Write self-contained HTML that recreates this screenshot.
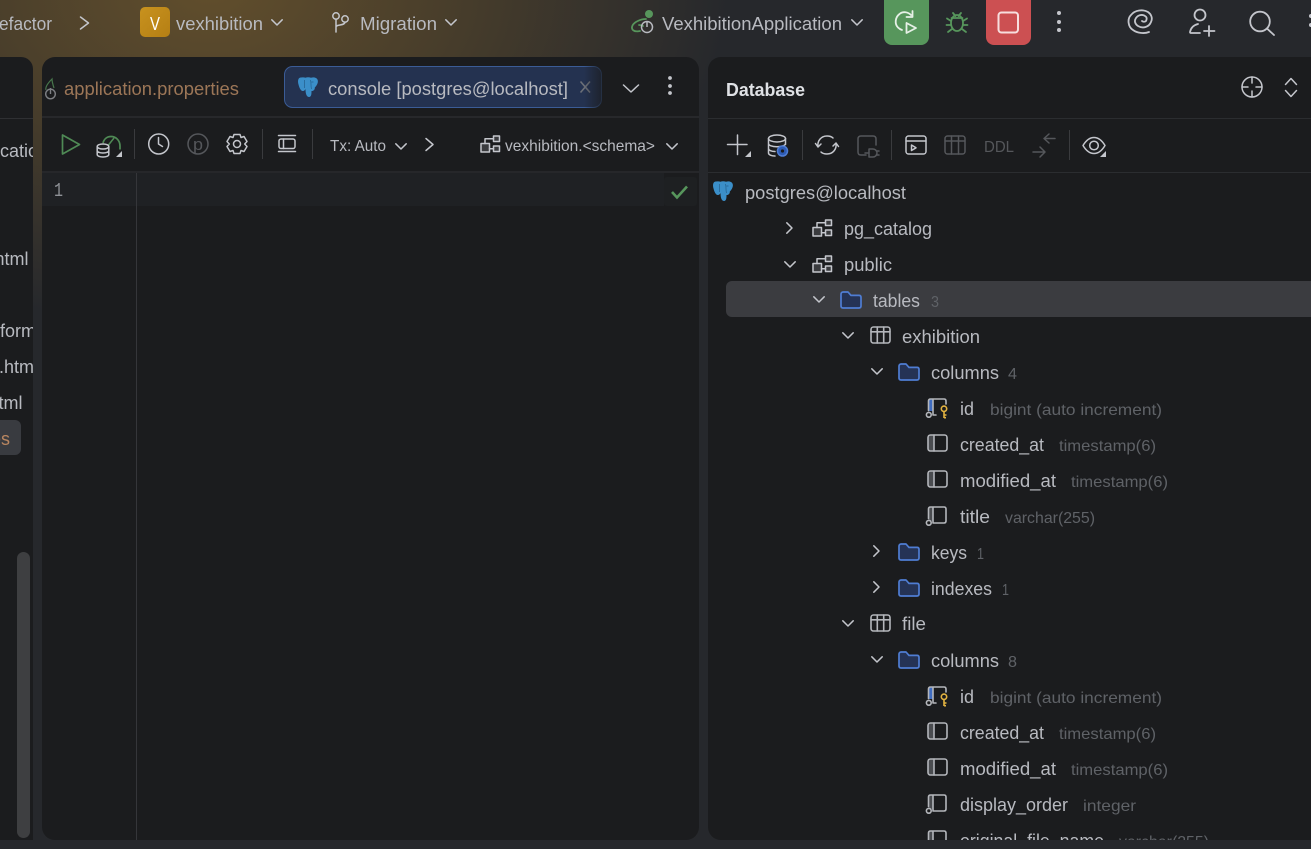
<!DOCTYPE html>
<html lang="en"><head><meta charset="utf-8"><title>Database</title>
<style>
html,body{margin:0;padding:0;width:1311px;height:849px;overflow:hidden;background:#26282c}
body{background:radial-gradient(ellipse 520px 340px at 210px -10px,#614e2c 0%,#493e2b 45%,#26282c 100%),#26282c}
svg{display:block;position:absolute;left:0;top:0}
text{font-family:"Liberation Sans",sans-serif;font-size:18px;fill:#b8bac0}
.s{font-size:16px;fill:#5f6267}
.i{fill:none;stroke:#c4c6cc;stroke-width:1.5;stroke-linecap:round;stroke-linejoin:round}
.d{fill:none;stroke:#55575b;stroke-width:1.5;stroke-linecap:round;stroke-linejoin:round}
.g{fill:none;stroke:#57965c;stroke-width:1.8;stroke-linecap:round;stroke-linejoin:round}
.c{fill:none;stroke:#b4b6bb;stroke-width:1.6;stroke-linecap:round;stroke-linejoin:round}
</style></head><body>
<svg width="1311" height="849" viewBox="0 0 1311 849" xmlns="http://www.w3.org/2000/svg">
<defs>
<linearGradient id="fd" x1="0" x2="1" y1="0" y2="0"><stop offset="0" stop-color="#1b1c1e" stop-opacity="0"/><stop offset="1" stop-color="#1b1c1e" stop-opacity=".75"/></linearGradient>
<linearGradient id="vg" x1="0" x2="1" y1="0" y2="1"><stop offset="0" stop-color="#c8921e"/><stop offset="1" stop-color="#b57f14"/></linearGradient>
<clipPath id="lp"><rect x="0" y="57" width="33" height="783"/></clipPath>
<clipPath id="tr"><rect x="708" y="173" width="603" height="667"/></clipPath>
<symbol id="pg" viewBox="0 0 20 20" width="20" height="20" overflow="visible">
<path fill="#3b8fc9" d="M3 .5C0 .5-.5 4 .5 7.500c.8 3 2 6 4 6.500 1.500.3 2.500-1 3-2 0 3 .5 8 3.500 8 2.500 0 2.500-3.500 2.500-6 2 .2 3.500-1.500 3.300-3.500C18.500 9 20.300 6 19.800 3.500 19.300.8 16-.3 13 .8 11 0 9 0 7.500.8 6 .2 5 .5 3 .5Z"/>
<path d="M6.500 3v8M12.500 3c1 3 0 6 1 9M15.500 5h-2" fill="none" stroke="#245f8c" stroke-width=".7"/>
</symbol>
<symbol id="sch" viewBox="0 0 21 18" width="21" height="18" overflow="visible">
<path class="i" fill="#3a3b3e" style="fill:#3a3b3e" d="M1 8.500h8.500V17H1ZM13.500 1h6v5.500h-6ZM13.500 11h6v5.500h-6Z"/>
<path class="i" d="M5 8.500V3.700h8.500M9.500 13.700h4"/>
</symbol>
<symbol id="fo" viewBox="0 0 22 18" width="22" height="18" overflow="visible">
<path d="M1 3.200C1 1.800 1.800 1 3.200 1H8l3 3.400h8c1.300 0 2 .8 2 2V15c0 1.300-.7 2-2 2H3c-1.300 0-2-.7-2-2Z" fill="#253355" stroke="#4f7dd3" stroke-width="1.700" stroke-linejoin="round"/>
</symbol>
<symbol id="tb" viewBox="0 0 21 18" width="21" height="18" overflow="visible">
<rect x="1" y="1" width="19" height="16" rx="2.500" class="c"/><path class="c" d="M1 5.800h19M7.300 1V17M13.700 1V17"/>
</symbol>
<symbol id="col" viewBox="0 0 21 18" width="21" height="18" overflow="visible">
<path d="M1 2.500C1 1.500 1.500 1 2.500 1H7v16H2.500C1.500 17 1 16.500 1 15.500Z" fill="#4a4c50"/>
<rect x="1" y="1" width="19" height="16" rx="2.500" class="c"/><path class="c" d="M7 1v16"/>
</symbol>
<symbol id="colt" viewBox="0 0 21 20" width="21" height="20" overflow="visible">
<path d="M2.500 12V2.500L4 1h3v14H2.500Z" fill="#4a4c50"/>
<path class="c" d="M2.500 12.500V3c0-1.300.7-2 2-2H18c1.300 0 2 .7 2 2v12c0 1.300-.7 2-2 2H7M7 1v16"/><circle cx="2.800" cy="16.800" r="2.400" class="c"/>
</symbol>
<symbol id="colk" viewBox="0 0 22 20" width="22" height="20" overflow="visible">
<path d="M2.500 12V2.500L4 1h3v12H2.500Z" fill="#3f6cc0"/>
<path class="c" d="M2.500 12.500V3c0-1.300.7-2 2-2H18c1.300 0 2 .7 2 2v3M7 1v16h3M7 17h3"/><circle cx="2.800" cy="16.800" r="2.400" class="c"/>
<circle cx="18" cy="10.800" r="2.700" fill="none" stroke="#e3b341" stroke-width="1.600"/><path d="M18 13.500V20M18 17h2.500M18 19.700h2" fill="none" stroke="#e3b341" stroke-width="1.600"/>
</symbol>
<symbol id="cd" viewBox="0 0 12 7" width="12" height="7" overflow="visible"><path class="i" d="M.8.800 6 6 11.200.800"/></symbol>
<symbol id="cr" viewBox="0 0 7 12" width="7" height="12" overflow="visible"><path class="i" d="M.8.800 6 6 .8 11.200"/></symbol>
</defs>

<!-- panels -->
<rect x="-20" y="57" width="53" height="800" rx="12" fill="#1b1c1e"/>
<rect x="42" y="57" width="657" height="783" rx="13" fill="#1b1c1e"/>
<rect x="708" y="57" width="630" height="783" rx="13" fill="#1b1c1e"/>
<rect x="0" y="840" width="1311" height="9" fill="#26282c"/>
<rect x="33" y="320" width="9" height="529" fill="#26282c"/>

<!-- top bar -->
<text x="-1" y="30" textLength="53" lengthAdjust="spacingAndGlyphs">efactor</text>
<path class="i" d="M80.500 17 88.500 23 80.500 29"/>
<rect x="140" y="7" width="30" height="30" rx="5" fill="url(#vg)"/>
<text x="150" y="30" textLength="10" lengthAdjust="spacingAndGlyphs" style="fill:#fff">V</text>
<text x="176" y="30" textLength="87" lengthAdjust="spacingAndGlyphs">vexhibition</text>
<use href="#cd" x="271" y="19"/>
<path class="i" d="M336 32V19M336 27c0-3 9-1 9-5"/><circle cx="336" cy="16" r="3.200" class="i"/><circle cx="345" cy="19" r="3.200" class="i"/>
<text x="360" y="30" textLength="77" lengthAdjust="spacingAndGlyphs">Migration</text>
<use href="#cd" x="445" y="19"/>

<circle cx="649" cy="14" r="4" fill="#57965c"/>
<path class="g" d="M646 19c-5 0-13 3-14 8-.5 4 4 5 8 4M639 25c2 0 3 0 4 1"/>
<circle cx="647" cy="27" r="5.500" fill="none" stroke="#b8bac0" stroke-width="1.500"/><path stroke="#b8bac0" stroke-width="1.500" d="M647 21v6"/>
<text x="662" y="30" textLength="180" lengthAdjust="spacingAndGlyphs">VexhibitionApplication</text>
<use href="#cd" x="851" y="19"/>
<path d="M884 -5h45v42a8 8 0 0 1-8 8h-29a8 8 0 0 1-8-8Z" fill="#57965c"/>
<path fill="none" stroke="#e6f0e6" stroke-width="1.800" stroke-linecap="round" stroke-linejoin="round" d="M911 15C908 12 903 11 899.500 14 895 17.500 894.500 24 898 27.500 899 28.500 900.500 29.500 902 30M912.500 11v6h-6"/>
<path fill="none" stroke="#e6f0e6" stroke-width="1.800" stroke-linejoin="round" d="M906.500 23v10l9.500-5Z"/>
<g class="g"><ellipse cx="957" cy="23" rx="6" ry="8"/><path d="M953 13l2.500 3M961 13l-2.500 3M951 21l-4-2.500M951 25h-4.500M952 29l-4 3M963 21l4-2.500M963 25h4.500M962 29l4 3M951.500 18h11"/></g>
<path d="M986 -5h45v42a8 8 0 0 1-8 8h-29a8 8 0 0 1-8-8Z" fill="#cc5052"/>
<rect x="998.500" y="12.500" width="19.500" height="20" rx="3" fill="none" stroke="#f7dede" stroke-width="2"/>
<g fill="#c4c6cc"><circle cx="1059" cy="13" r="2"/><circle cx="1059" cy="22" r="2"/><circle cx="1059" cy="30" r="2"/></g>
<path class="i" style="stroke-width:1.800" d="M1149 32c-5 2-12 1-16-2-5-3-6-11-2-15 4-5 12-6 17-3 3 2 5 6 3 10-2 5-8 7-13 4-3-2-4-5-2-8 2-3 6-4 9-2 2 1 2 3 1 5-1 1-3 1-4 0"/>
<circle cx="1200" cy="15" r="5.500" class="i" style="stroke-width:1.800"/>
<path class="i" style="stroke-width:1.800" d="M1198 24c-4 1-7 3-8 8 0 1 0 1 1 1h9M1204 31h10.500M1209 26v10"/>
<circle cx="1260" cy="21.500" r="9.800" class="i" style="stroke-width:1.800"/><path class="i" style="stroke-width:1.800" d="M1267.500 29 1274 35"/>
<g fill="#c4c6cc"><circle cx="1311" cy="16" r="2"/><circle cx="1311" cy="25" r="2"/></g>

<!-- left panel -->
<g clip-path="url(#lp)">
<rect x="0" y="118" width="33" height="1" fill="#2f3033"/>
<text x="0" y="157">cation</text>
<text x="-5.500" y="265">html</text>
<text x="0" y="337">form</text>
<text x="-1" y="373">.html</text>
<text x="-11.500" y="409">html</text>
<rect x="-10" y="420" width="31" height="35" rx="6" fill="#393b40"/>
<text x="-9" y="445" style="fill:#b98660">es</text>
<rect x="17" y="552" width="13" height="286" rx="6.500" fill="#3e3f41"/>
</g>

<!-- center tabs -->
<g opacity=".75"><path d="M46 90c-1-3 2-7 6-11 0 3 1 6 2 9" fill="none" stroke="#57965c" stroke-width="1.200"/><circle cx="50.500" cy="94" r="4.800" fill="none" stroke="#a0a2a6" stroke-width="1.400"/><path d="M50.500 88v6" stroke="#a0a2a6" stroke-width="1.400"/></g>
<text x="64" y="95" textLength="175" lengthAdjust="spacingAndGlyphs" style="fill:#9c7657">application.properties</text>
<rect x="284.500" y="66.500" width="317" height="41" rx="8" fill="#243250" stroke="#3b5c96"/>
<use href="#pg" x="298" y="77"/>
<text x="328" y="95" textLength="240" lengthAdjust="spacingAndGlyphs">console [postgres@localhost]</text>
<path d="M580.500 81.500 590 92.500M590 81.500 580.500 92.500" stroke="#6c7078" stroke-width="1.600" fill="none"/>
<rect x="584" y="65" width="19" height="44" fill="url(#fd)"/>
<path class="i" d="M623.500 85 631 92 638.500 85"/>
<g fill="#c4c6cc"><circle cx="670" cy="78" r="1.900"/><circle cx="670" cy="86" r="1.900"/><circle cx="670" cy="93" r="1.900"/></g>
<rect x="42" y="116" width="657" height="2" fill="#27282b"/>

<!-- center toolbar -->
<path d="M62.500 135v19l17-9.500Z" fill="none" stroke="#4f8a55" stroke-width="1.700" stroke-linejoin="round"/>
<path d="M103 143c1-4 4-6.500 8-6.500 5 0 9 4 9 9.500v3.500" fill="none" stroke="#4f8a55" stroke-width="1.700"/><path d="M108.500 145l5.500-7" stroke="#4f8a55" stroke-width="1.500"/>
<g class="i"><ellipse cx="103" cy="146.500" rx="5.800" ry="2.500" style="fill:#1b1c1e"/><path d="M97.200 146.500v8c0 1.500 2.500 2.500 5.800 2.500s5.800-1 5.800-2.500v-8M97.200 150.500c0 1.500 2.500 2.500 5.800 2.500s5.800-1 5.800-2.500"/></g>
<path d="M122 151v6h-6Z" fill="#c4c6cc"/>
<rect x="134" y="129" width="1" height="30" fill="#3a3b3e"/>
<circle cx="158.700" cy="144" r="10" class="i"/><path class="i" d="M158.500 137.500v6.500l4 2.500"/>
<circle cx="198" cy="144" r="10" class="d"/>
<text x="193" y="150" textLength="10" lengthAdjust="spacingAndGlyphs" style="fill:#55575b;font-size:17px">p</text>
<path class="i" d="M234 134.500h6l1 3 3-1 3 5-2.300 2.500 2.300 2.500-3 5-3-1-1 3h-6l-1-3-3 1-3-5 2.300-2.500-2.300-2.500 3-5 3 1Z"/><circle cx="237" cy="144" r="3.500" class="i"/>
<rect x="262" y="129" width="1" height="30" fill="#3a3b3e"/>
<path class="i" d="M278.500 135.500h17M278.500 151.500h17"/><rect x="279" y="139" width="16" height="9.500" rx="2" class="i"/><path class="i" d="M283.500 139v9.500"/>
<rect x="312" y="129" width="1" height="30" fill="#3a3b3e"/>
<text x="330" y="151" textLength="56" lengthAdjust="spacingAndGlyphs" style="font-size:16px">Tx: Auto</text>
<use href="#cd" x="395" y="143"/>
<path class="i" d="M426 138.500 433 144.500 426 150.500"/>
<use href="#sch" x="480" y="135"/>
<text x="505" y="151" textLength="150" lengthAdjust="spacingAndGlyphs" style="font-size:16px">vexhibition.&lt;schema&gt;</text>
<use href="#cd" x="666" y="143"/>
<rect x="42" y="171" width="657" height="2" fill="#26272a"/>

<!-- editor -->
<rect x="42" y="173" width="622" height="33" fill="#1f2124"/>
<rect x="664" y="177" width="33" height="29" rx="3" fill="#1e2022"/>
<rect x="136" y="173" width="1" height="667" fill="#35363a"/>
<text x="54" y="196" textLength="9" lengthAdjust="spacingAndGlyphs" style="fill:#8f9297;font-family:'Liberation Mono',monospace;font-size:19px">1</text>
<path d="M672 192l5 5.500 10-11" fill="none" stroke="#57965c" stroke-width="2.600"/>

<!-- database header -->
<text x="726" y="96" textLength="79" lengthAdjust="spacingAndGlyphs" style="fill:#dfe1e5;font-weight:700">Database</text>
<circle cx="1252" cy="87" r="10" class="i"/><path class="i" d="M1252 77v6M1252 91v6M1242 87h6M1256 87h6"/>
<path class="i" d="M1285.500 84.500 1291 78.500 1296.500 84.500M1285.500 90.500 1291 96.500 1296.500 90.500"/>
<rect x="708" y="118" width="603" height="1" fill="#2b2d30"/>

<!-- db toolbar -->
<path class="i" d="M737.500 135v19.500M727.500 144.500h19.500"/><path d="M751 151v6h-6Z" fill="#c4c6cc"/>
<g class="i"><ellipse cx="777" cy="138.500" rx="8.500" ry="3.500"/><path d="M768.500 138.500v14.500c0 1.800 3 3 6.500 3M785.500 138.500v6M768.500 143.500c0 1.800 3.500 3.200 8.500 3.200s8.500-1.400 8.500-3.200M768.500 148.500c0 1.800 3 3 6.500 3"/></g>
<circle cx="782.500" cy="151" r="5" fill="#2d5bb5" stroke="#4f7dd3" stroke-width="1.500"/><circle cx="782.500" cy="151" r="1.600" fill="#1b1c1e"/>
<rect x="802" y="130" width="1" height="30" fill="#3a3b3e"/>
<path class="i" d="M818 147c-1-6 3-11 9-11 3 0 5 1 6 2M836 143c1 6-3 11-9 11-3 0-5-1-6-2M815.500 143.500l2.500 3.500 3-3M838.500 146.500l-2.500-3.500-3 3"/>
<path class="d" d="M866 155h-5c-2 0-3-1-3-3v-13c0-2 1-3 3-3h12c2 0 3 1 3 3v6M869 149h4a4 4 0 0 1 0 8h-4ZM877 151h2M877 155h2M865 153h4"/>
<rect x="891" y="130" width="1" height="30" fill="#3a3b3e"/>
<rect x="906" y="136" width="20" height="18" rx="2.500" class="i"/><path class="i" d="M906 141h20M911.500 145v5.500l4.500-2.700Z"/>
<rect x="945" y="136" width="20" height="18" rx="2.500" class="d"/><path class="d" d="M945 141h20M951.500 136v18M958.500 136v18"/>
<text x="984" y="152" textLength="30" lengthAdjust="spacingAndGlyphs" style="font-size:16px;fill:#55575b">DDL</text>
<path class="d" d="M1055 138.500h-11M1049 134l-5 4.500 5 4.500M1033 152h11M1040 147l5 5-5 5"/>
<rect x="1069" y="130" width="1" height="30" fill="#3a3b3e"/>
<path class="i" d="M1083 145.500c3-5 6.500-8 11-8s8 3 11 8c-3 5-6.500 8-11 8s-8-3-11-8Z"/><circle cx="1094" cy="145.500" r="4.300" class="i"/>
<path d="M1106 151v6h-6Z" fill="#c4c6cc"/>
<rect x="708" y="172" width="603" height="1" fill="#2b2d30"/>

<!-- tree -->
<g clip-path="url(#tr)">
<rect x="726" y="281" width="620" height="36" rx="6" fill="#3b3c40"/>
<use href="#pg" x="713" y="181"/>
<text x="745" y="199" textLength="161" lengthAdjust="spacingAndGlyphs">postgres@localhost</text>

<use href="#cr" x="786" y="222"/><use href="#sch" x="812" y="219"/>
<text x="844" y="235" textLength="88" lengthAdjust="spacingAndGlyphs">pg_catalog</text>

<use href="#cd" x="784" y="261"/><use href="#sch" x="812" y="255"/>
<text x="844" y="271" textLength="48" lengthAdjust="spacingAndGlyphs">public</text>

<use href="#cd" x="813" y="296"/><use href="#fo" x="840" y="291"/>
<text x="873" y="307" textLength="47" lengthAdjust="spacingAndGlyphs">tables</text>
<text x="931" y="307" class="s" textLength="8" lengthAdjust="spacingAndGlyphs">3</text>

<use href="#cd" x="842" y="332"/><use href="#tb" x="870" y="326"/>
<text x="902" y="343" textLength="78" lengthAdjust="spacingAndGlyphs">exhibition</text>

<use href="#cd" x="871" y="368"/><use href="#fo" x="898" y="363"/>
<text x="931" y="379" textLength="68" lengthAdjust="spacingAndGlyphs">columns</text>
<text x="1008" y="379" class="s" textLength="9" lengthAdjust="spacingAndGlyphs">4</text>

<use href="#colk" x="926" y="398"/>
<text x="960" y="415" textLength="14" lengthAdjust="spacingAndGlyphs">id</text>
<text x="990" y="415" class="s" textLength="172" lengthAdjust="spacingAndGlyphs">bigint (auto increment)</text>

<use href="#col" x="927" y="434"/>
<text x="960" y="451" textLength="84" lengthAdjust="spacingAndGlyphs">created_at</text>
<text x="1059" y="451" class="s" textLength="97" lengthAdjust="spacingAndGlyphs">timestamp(6)</text>

<use href="#col" x="927" y="470"/>
<text x="960" y="487" textLength="96" lengthAdjust="spacingAndGlyphs">modified_at</text>
<text x="1071" y="487" class="s" textLength="97" lengthAdjust="spacingAndGlyphs">timestamp(6)</text>

<use href="#colt" x="926" y="506"/>
<text x="960" y="523" textLength="30" lengthAdjust="spacingAndGlyphs">title</text>
<text x="1005" y="523" class="s" textLength="90" lengthAdjust="spacingAndGlyphs">varchar(255)</text>

<use href="#cr" x="873" y="545"/><use href="#fo" x="898" y="543"/>
<text x="931" y="559" textLength="36" lengthAdjust="spacingAndGlyphs">keys</text>
<text x="977" y="559" class="s" textLength="7" lengthAdjust="spacingAndGlyphs">1</text>

<use href="#cr" x="873" y="581"/><use href="#fo" x="898" y="579"/>
<text x="931" y="595" textLength="61" lengthAdjust="spacingAndGlyphs">indexes</text>
<text x="1002" y="595" class="s" textLength="7" lengthAdjust="spacingAndGlyphs">1</text>

<use href="#cd" x="842" y="620"/><use href="#tb" x="870" y="614"/>
<text x="902" y="630" textLength="24" lengthAdjust="spacingAndGlyphs">file</text>

<use href="#cd" x="871" y="656"/><use href="#fo" x="898" y="651"/>
<text x="931" y="667" textLength="68" lengthAdjust="spacingAndGlyphs">columns</text>
<text x="1008" y="667" class="s" textLength="9" lengthAdjust="spacingAndGlyphs">8</text>

<use href="#colk" x="926" y="686"/>
<text x="960" y="703" textLength="14" lengthAdjust="spacingAndGlyphs">id</text>
<text x="990" y="703" class="s" textLength="172" lengthAdjust="spacingAndGlyphs">bigint (auto increment)</text>

<use href="#col" x="927" y="722"/>
<text x="960" y="739" textLength="84" lengthAdjust="spacingAndGlyphs">created_at</text>
<text x="1059" y="739" class="s" textLength="97" lengthAdjust="spacingAndGlyphs">timestamp(6)</text>

<use href="#col" x="927" y="758"/>
<text x="960" y="775" textLength="96" lengthAdjust="spacingAndGlyphs">modified_at</text>
<text x="1071" y="775" class="s" textLength="97" lengthAdjust="spacingAndGlyphs">timestamp(6)</text>

<use href="#colt" x="926" y="794"/>
<text x="960" y="811" textLength="108" lengthAdjust="spacingAndGlyphs">display_order</text>
<text x="1083" y="811" class="s" textLength="53" lengthAdjust="spacingAndGlyphs">integer</text>

<use href="#colt" x="926" y="830"/>
<text x="960" y="847" textLength="144" lengthAdjust="spacingAndGlyphs">original_file_name</text>
<text x="1119" y="847" class="s" textLength="90" lengthAdjust="spacingAndGlyphs">varchar(255)</text>
</g>
</svg>
</body></html>
